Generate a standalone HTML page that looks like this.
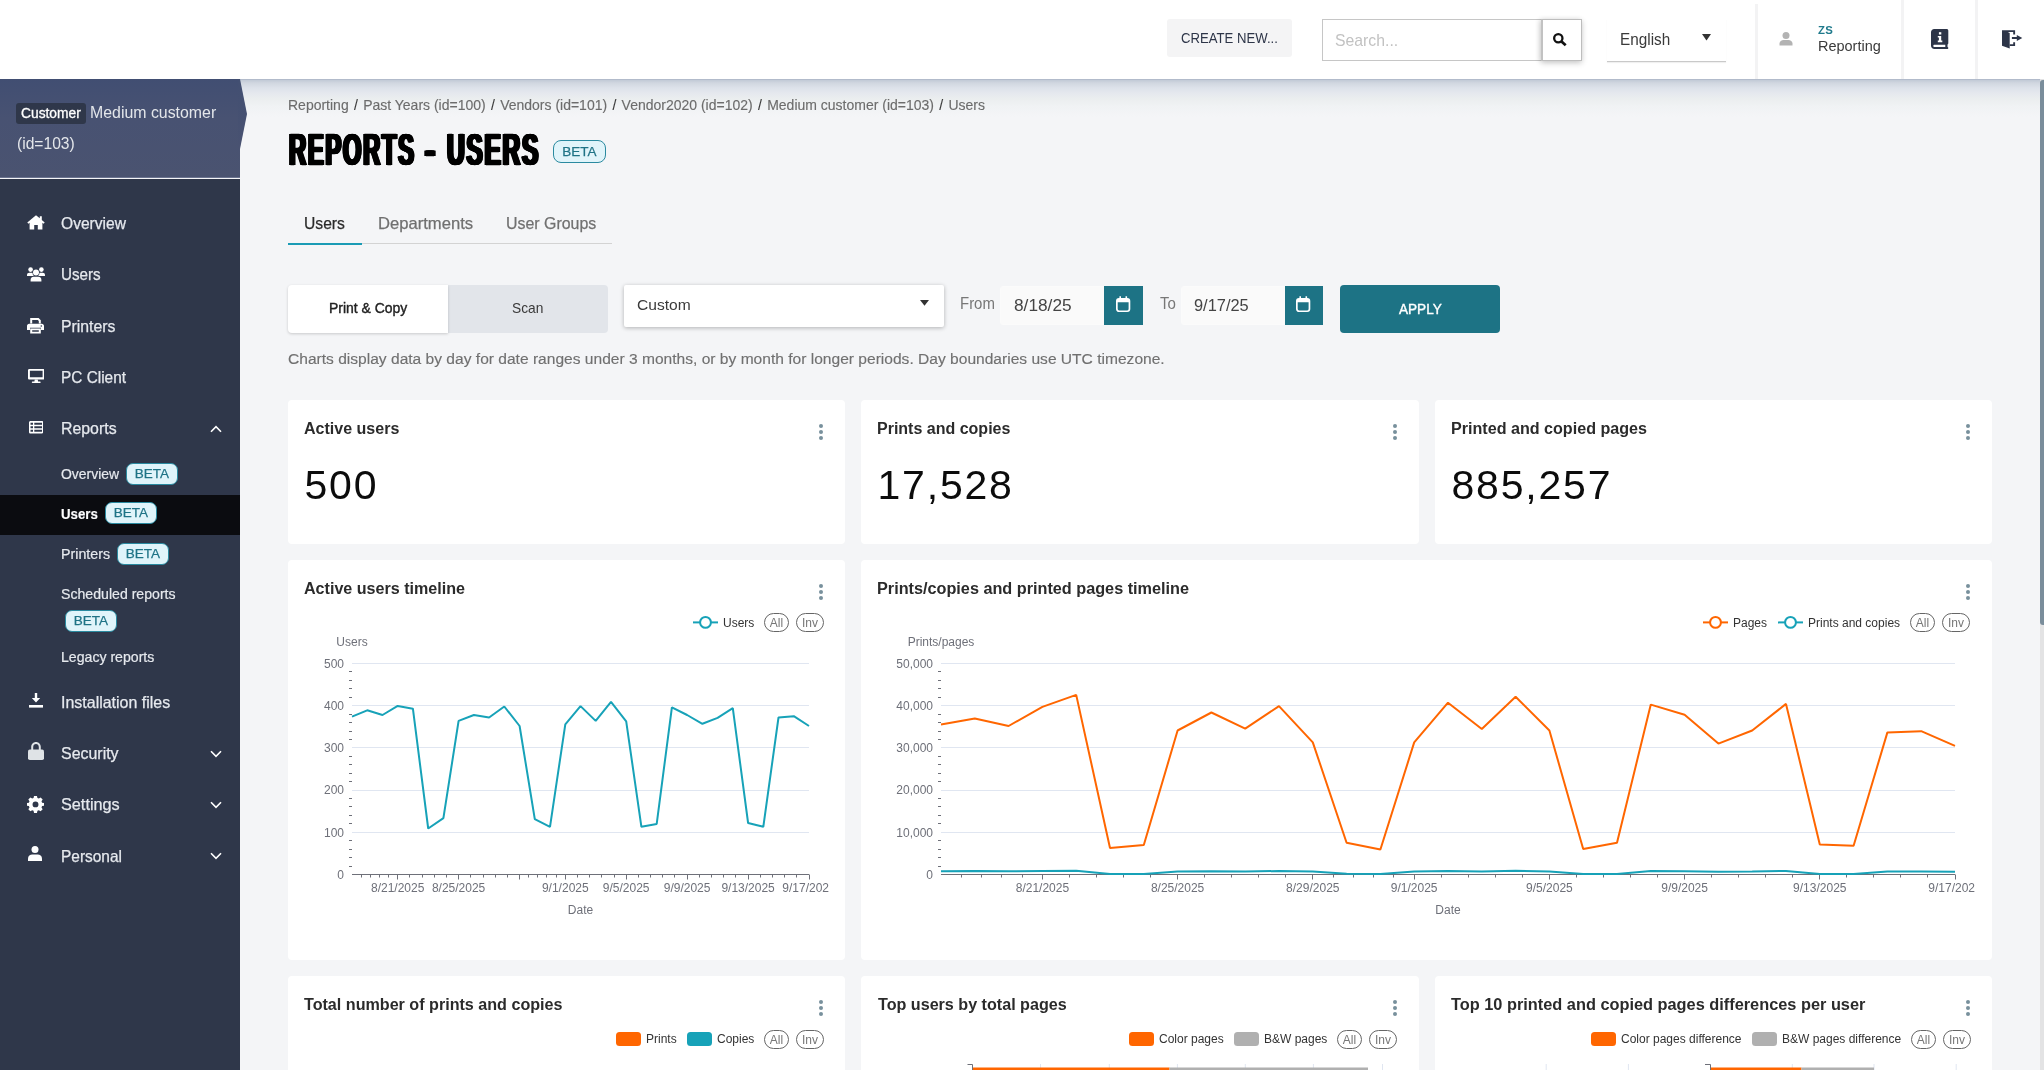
<!DOCTYPE html>
<html lang="en">
<head>
<meta charset="utf-8">
<title>Reports - Users</title>
<style>
*{box-sizing:border-box;margin:0;padding:0}
html,body{width:2044px;height:1070px;overflow:hidden;background:#f4f5f7;font-family:"Liberation Sans",sans-serif;}
.abs{position:absolute}
.t{position:absolute;white-space:nowrap;line-height:1}
#page{position:relative;width:2044px;height:1070px;overflow:hidden;background:#f4f5f7;will-change:transform}
/* top bar */
#topbar{position:absolute;left:0;top:0;width:2044px;height:79px;background:#fff;z-index:5}
#topshadow{position:absolute;left:0;top:79px;width:2044px;height:40px;background:linear-gradient(to bottom,#a9b3c5 0,#c4ccd8 1.5px,#d1d7e0 4px,#dde2ea 9px,#e5e8ee 14px,#ebeeef 20px,#f0f2f4 27px,#f4f5f7 38px);z-index:0}
/* sidebar */
#side{position:absolute;left:0;top:79px;width:240px;height:991px;background:#2f374a;z-index:6}
#sidehead{position:absolute;left:0;top:0;width:240px;height:99px;background:linear-gradient(to bottom,#414e72 0,#485272 40%,#4a5370 100%)}
.mi{position:absolute;left:61px;color:#e6e9ee;-webkit-text-stroke:.25px #e6e9ee;font-size:16.5px;white-space:nowrap;line-height:1}
.smi{position:absolute;left:61px;color:#e6e9ee;-webkit-text-stroke:.2px #e6e9ee;font-size:14.5px;white-space:nowrap;line-height:1}
.beta{position:absolute;border:1px solid #2a8aa0;background:#e0f4fa;color:#1f7386;-webkit-text-stroke:.25px #1f7386;border-radius:7px;font-size:13.5px;line-height:1;text-align:center}
.card{position:absolute;background:#fff;border-radius:4px}
.ct{position:absolute;margin-top:1px;font-weight:bold;font-size:16px;color:#2b2b2b;white-space:nowrap;line-height:1}
.dots{position:absolute;width:4px}
.dots i{display:block;width:4px;height:4px;border-radius:50%;background:#78909c;margin-bottom:2px}
.big{position:absolute;margin-left:.5px;font-size:41px;color:#0c0c0c;letter-spacing:1.8px;white-space:nowrap;line-height:1}
.lg{position:absolute;font-size:12px;color:#333;white-space:nowrap;line-height:1}
.pill{position:absolute;border:1px solid #666;border-radius:10px;height:19px;font-size:12px;color:#777;text-align:center;padding-top:1px;line-height:17px}
.ax{position:absolute;font-size:12px;color:#6e7079;white-space:nowrap;line-height:1}
</style>
</head>
<body>
<div id="page">

<!-- ============ TOP BAR ============ -->
<div id="topshadow"></div>
<div id="topbar">
  <div class="abs" style="left:1167px;top:19px;width:125px;height:38px;background:#f4f4f5;border-radius:3px"></div>
  <div class="t" id="tx-create" style="left:1180.8px;top:30px;font-size:15px;color:#2d3548;transform:scaleX(0.8763);transform-origin:0 0;">CREATE NEW...</div>

  <div class="abs" style="left:1322px;top:19px;width:221px;height:42px;border:1px solid #c6c6c6;background:#fff"></div>
  <div class="t" id="tx-search" style="left:1334.5px;top:32px;font-size:17px;color:#c2c2c2;transform:scaleX(0.9288);transform-origin:0 0;">Search...</div>
  <div class="abs" style="left:1541px;top:19px;width:41px;height:42px;border:1px solid #bdbdbd;border-left:2px solid #c2c2c2;background:#fff;box-shadow:0 2px 6px rgba(0,0,0,0.2),-2px 0 5px rgba(0,0,0,0.08)"></div>
  <svg class="abs" style="left:1552px;top:32px" width="16" height="16" viewBox="0 0 16 16"><circle cx="6.300" cy="6.200" r="4.150" fill="none" stroke="#111" stroke-width="2.300"/><path d="M9.500 9.400 L13.700 13.300" stroke="#111" stroke-width="2.700"/></svg>

  <div class="abs" style="left:1607px;top:19px;width:119px;height:43px;border-bottom:1px solid #c9c9c9;box-shadow:0 1px 1px rgba(0,0,0,0.06)"></div>
  <div class="t" id="tx-eng" style="left:1620.2px;top:31px;font-size:17px;color:#3a3a3a;transform:scaleX(0.9002);transform-origin:0 0;">English</div>
  <svg class="abs" style="left:1702px;top:34px" width="9" height="7" viewBox="0 0 9 7"><path d="M0 0 H9 L4.5 6.5 Z" fill="#333"/></svg>

  <div class="abs" style="left:1755px;top:4px;width:3px;height:75px;background:#f3f3f4"></div>
  <div class="abs" style="left:1901px;top:0;width:3px;height:79px;background:#f3f3f4"></div>
  <div class="abs" style="left:1975px;top:0;width:3px;height:79px;background:#f3f3f4"></div>

  <svg class="abs" style="left:1779px;top:32px" width="14" height="14" viewBox="0 0 14 14"><circle cx="7" cy="3.6" r="3.5" fill="#b3b3b3"/><path d="M0.5 13.5 V11.5 C0.5 9.2 2.6 8 4.5 8 H9.5 C11.4 8 13.5 9.2 13.5 11.5 V13.5 Z" fill="#b3b3b3"/></svg>
  <div class="t" id="tx-zs" style="left:1818.2px;top:25px;font-size:11.5px;font-weight:bold;color:#1f7a8c;letter-spacing:.3px;transform:scaleX(0.9871);transform-origin:0 0;">ZS</div>
  <div class="t" id="tx-rep" style="left:1818.2px;top:38px;font-size:15.5px;color:#3a3a3a;transform:scaleX(0.9343);transform-origin:0 0;">Reporting</div>

  <!-- book icon -->
  <svg class="abs" style="left:1931px;top:29px" width="18" height="20" viewBox="0 0 18 20"><path d="M3.2 0 H15.5 C16.6 0 17.3 .7 17.3 1.7 V14.2 C17.3 14.8 17 15.2 16.5 15.4 V18 C17 18.1 17.3 18.5 17.3 19 C17.3 19.6 16.9 20 16.3 20 H3.4 C1.5 20 0 18.5 0 16.7 V3.2 C0 1.4 1.4 0 3.2 0 Z M3.4 15.8 C2.8 15.8 2.3 16.2 2.3 16.9 C2.3 17.5 2.8 18 3.4 18 H14.3 V15.8 Z" fill="#2d3548"/><rect x="7.9" y="3.2" width="2.4" height="2.3" fill="#fff"/><path d="M6.8 7 H10.2 V11.6 H11.3 V13.2 H6.8 V11.6 H7.9 V8.6 H6.8 Z" fill="#fff"/></svg>
  <!-- sign out icon -->
  <svg class="abs" style="left:2002px;top:29.5px" width="21" height="19" viewBox="0 0 21 19"><path d="M0 0.200 H13.100 V4.500 H11.200 V2.100 H5.800 L7.700 2.900 V18.400 L0 15.700 Z" fill="#2d3548"/><path d="M7.700 14.200 H11.200 V12.200 H13.100 V16.100 H7.700 Z" fill="#2d3548"/><path d="M9.900 6.900 H14.800 V5 L20.300 8 L14.800 11 V9.100 H9.900 Z" fill="#2d3548"/></svg>
</div>

<!-- ============ SIDEBAR ============ -->
<svg class="abs" style="left:238px;top:79px;z-index:7" width="12" height="72" viewBox="0 0 12 72"><defs><linearGradient id="hg" x1="0" y1="0" x2="0" y2="1"><stop offset="0" stop-color="#424f72"/><stop offset="1" stop-color="#495271"/></linearGradient></defs><path d="M0 0 H2 L9 35 L2 70 H0 Z" fill="url(#hg)"/></svg>
<div id="side">
  <div id="sidehead"></div>
  <div class="abs" style="left:0;top:98px;width:240px;height:1px;background:#6b7490"></div><div class="abs" style="left:0;top:99px;width:240px;height:1px;background:#f4f5f8"></div>
  <div class="abs" style="left:16px;top:24px;width:70px;height:21px;background:#2f374a;border-radius:3px"></div>
  <div class="t" id="tx-cust" style="left:21.0px;top:27px;font-size:14px;color:#fff;-webkit-text-stroke:.3px #fff;transform:scaleX(0.9854);transform-origin:0 0;">Customer</div>
  <div class="t" id="tx-med" style="left:89.7px;top:26px;font-size:16px;color:#e3e6ea;transform:scaleX(0.9925);transform-origin:0 0;">Medium customer</div>
  <div class="t" id="tx-id" style="left:16.5px;top:57px;font-size:16px;color:#e3e6ea;transform:scaleX(0.9754);transform-origin:0 0;">(id=103)</div>

  <!-- menu icons: tops are relative to #side (page y - 79) -->
  <svg class="abs" style="left:26.5px;top:136px" width="18" height="14.5" viewBox="0 0 18 14.5"><path d="M9 0.2 L0.3 7.4 L1.4 8.7 L2.6 7.7 V14.5 H7.2 V10 H10.8 V14.5 H15.4 V7.7 L16.6 8.7 L17.7 7.4 L14.8 5 V1.3 H12.8 V3.3 Z" fill="#fff"/></svg>
  <div class="mi" id="tx-m1" style="left:61.2px;top:136px;transform:scaleX(0.9452);transform-origin:0 0;">Overview</div>

  <svg class="abs" style="left:26.5px;top:188px" width="18" height="14.5" viewBox="0 0 18 14.5"><circle cx="3.6" cy="2.6" r="2.3" fill="#fff"/><circle cx="14.4" cy="2.6" r="2.3" fill="#fff"/><circle cx="9" cy="5.4" r="3" fill="#fff"/><path d="M0 8.2 C0 6.6 1 5.8 2.3 5.8 H4.6 C5 5.8 5.3 5.9 5.6 6.1 C5.5 7.3 6 8.3 6.8 9 H0 Z" fill="#fff"/><path d="M18 8.2 C18 6.6 17 5.8 15.7 5.8 H13.4 C13 5.8 12.7 5.9 12.4 6.1 C12.5 7.3 12 8.3 11.200 9 H18 Z" fill="#fff"/><path d="M3.6 14.5 V12.8 C3.600 10.800 5 9.700 6.600 9.700 H11.400 C13 9.700 14.400 10.800 14.400 12.800 V14.500 Z" fill="#fff"/></svg>
  <div class="mi" id="tx-m2" style="left:61.2px;top:187px;transform:scaleX(0.9212);transform-origin:0 0;">Users</div>

  <svg class="abs" style="left:26.5px;top:239px" width="17" height="15.500" viewBox="0 0 17 15.5"><path d="M3.200 0 H11.600 L13.800 2.200 V5.600 H11.800 V3 L10.800 2 H5.200 V5.600 H3.200 Z" fill="#fff"/><path d="M2.200 5.800 H14.800 C16 5.800 17 6.800 17 8 V12 H14 V9.800 H3 V12 H0 V8 C0 6.800 1 5.800 2.200 5.800 Z" fill="#fff"/><circle cx="14.300" cy="8" r=".8" fill="#2f374a"/><path d="M3.200 10.600 H13.800 V15.500 H3.200 Z M5.200 12.200 V13.700 H11.800 V12.200 Z" fill="#fff" fill-rule="evenodd"/></svg>
  <div class="mi" id="tx-m3" style="left:61.2px;top:239px;transform:scaleX(0.9585);transform-origin:0 0;">Printers</div>

  <svg class="abs" style="left:27.500px;top:290px" width="16.500" height="14" viewBox="0 0 16.500 14"><path d="M1.300 0 H15.200 C15.900 0 16.500 .6 16.500 1.300 V9.200 C16.500 9.900 15.900 10.500 15.200 10.500 H1.300 C.6 10.500 0 9.900 0 9.200 V1.300 C0 .6 .6 0 1.300 0 Z M1.900 1.800 V8.200 H14.600 V1.800 Z" fill="#fff" fill-rule="evenodd"/><path d="M6.800 10.500 H9.700 L10.100 12.400 H12 C12.400 12.400 12.700 12.700 12.700 13.200 C12.700 13.700 12.400 14 12 14 H4.500 C4.100 14 3.800 13.700 3.800 13.200 C3.800 12.700 4.100 12.400 4.500 12.400 H6.400 Z" fill="#fff"/></svg>
  <div class="mi" id="tx-m4" style="left:61.2px;top:290px;transform:scaleX(0.9325);transform-origin:0 0;">PC Client</div>

  <svg class="abs" style="left:28.500px;top:342px" width="14.500" height="12.500" viewBox="0 0 14.500 12.500"><path d="M1.600 0 H12.900 C13.800 0 14.500 .7 14.500 1.600 V10.900 C14.500 11.800 13.800 12.500 12.900 12.500 H1.600 C.7 12.500 0 11.800 0 10.900 V1.600 C0 .7 .7 0 1.600 0 Z M1.500 1.700 V3.700 H4 V1.700 Z M5.300 1.700 V3.700 H13 V1.700 Z M1.500 5.200 V7.200 H4 V5.200 Z M5.300 5.200 V7.200 H13 V5.200 Z M1.500 8.700 V10.700 H4 V8.700 Z M5.300 8.700 V10.700 H13 V8.700 Z" fill="#fff" fill-rule="evenodd"/></svg>
  <div class="mi" id="tx-m5" style="left:61.2px;top:341px;transform:scaleX(0.9622);transform-origin:0 0;">Reports</div>
  <svg class="abs" style="left:210px;top:346px" width="12" height="8" viewBox="0 0 12 8"><path d="M1 6.800 L6 1.600 L11 6.800" fill="none" stroke="#fff" stroke-width="1.600"/></svg>

  <!-- submenu -->
  <div class="smi" id="tx-s1" style="left:60.7px;top:388px;transform:scaleX(0.9613);transform-origin:0 0;">Overview</div>
  <div class="beta" style="left:126px;top:384px;width:52px;height:22px;padding-top:3px">BETA</div>

  <div class="abs" style="left:0;top:416px;width:240px;height:40px;background:#0b0c10"></div>
  <div class="smi" id="tx-s2" style="left:60.7px;top:428px;color:#fff;font-weight:bold;font-size:14px;transform:scaleX(0.9455);transform-origin:0 0;">Users</div>
  <div class="beta" style="left:105px;top:423px;width:52px;height:22px;padding-top:3px">BETA</div>

  <div class="smi" id="tx-s3" style="left:60.7px;top:468px;transform:scaleX(0.9826);transform-origin:0 0;">Printers</div>
  <div class="beta" style="left:117px;top:464px;width:52px;height:22px;padding-top:3px">BETA</div>

  <div class="smi" id="tx-s4" style="left:60.7px;top:508px;transform:scaleX(0.9738);transform-origin:0 0;">Scheduled reports</div>
  <div class="beta" style="left:65px;top:531px;width:52px;height:22px;padding-top:3px">BETA</div>

  <div class="smi" id="tx-s5" style="left:60.7px;top:571px;transform:scaleX(0.9727);transform-origin:0 0;">Legacy reports</div>

  <svg class="abs" style="left:29px;top:614px" width="14" height="15" viewBox="0 0 14 15"><path d="M5.800 0 H8.200 V5 H11.200 L7 9.500 L2.800 5 H5.800 Z" fill="#fff"/><rect x="0" y="12" width="14" height="2.600" fill="#fff"/></svg>
  <div class="mi" id="tx-m6" style="left:61.0px;top:615px;transform:scaleX(0.9680);transform-origin:0 0;">Installation files</div>

  <svg class="abs" style="left:28px;top:663px" width="16" height="18" viewBox="0 0 16 18"><path d="M3.200 8 V5 C3.200 2.200 5.300 0 8 0 C10.700 0 12.800 2.200 12.800 5 V8 H10.800 V5 C10.800 3.300 9.600 2 8 2 C6.400 2 5.200 3.300 5.200 5 V8 Z" fill="#dfe3e6"/><rect x="0" y="7.600" width="16" height="10.400" rx="1.800" fill="#dfe3e6"/></svg>
  <div class="mi" id="tx-m7" style="left:61.0px;top:666px;transform:scaleX(0.9663);transform-origin:0 0;">Security</div>
  <svg class="abs" style="left:210px;top:671px" width="12" height="8" viewBox="0 0 12 8"><path d="M1 1.200 L6 6.400 L11 1.200" fill="none" stroke="#fff" stroke-width="1.600"/></svg>

  <svg class="abs" style="left:26.500px;top:717px" width="17" height="17" viewBox="0 0 17 17"><path d="M7 0 H10 L10.500 2.200 L11.900 2.800 L13.800 1.600 L15.900 3.700 L14.700 5.600 L15.300 7 L17.500 7.500 V10 L15.300 10.500 L14.700 11.900 L15.900 13.800 L13.800 15.900 L11.900 14.700 L10.500 15.300 L10 17.500 H7 L6.500 15.300 L5.100 14.700 L3.200 15.900 L1.100 13.800 L2.300 11.900 L1.700 10.500 L-.5 10 V7.500 L1.700 7 L2.300 5.600 L1.100 3.700 L3.200 1.600 L5.100 2.800 L6.500 2.200 Z M8.500 5.700 A3 3 0 1 0 8.500 11.800 A3 3 0 1 0 8.500 5.700 Z" fill="#fff" fill-rule="evenodd" transform="translate(.25,-.1) scale(.97)"/></svg>
  <div class="mi" id="tx-m8" style="left:61.0px;top:717px;transform:scaleX(0.9845);transform-origin:0 0;">Settings</div>
  <svg class="abs" style="left:210px;top:722px" width="12" height="8" viewBox="0 0 12 8"><path d="M1 1.200 L6 6.400 L11 1.200" fill="none" stroke="#fff" stroke-width="1.600"/></svg>

  <svg class="abs" style="left:28px;top:767px" width="14" height="15" viewBox="0 0 14 15"><circle cx="7" cy="3.600" r="3.500" fill="#fff"/><path d="M0 15 V12.500 C0 10 2.200 8.600 4.200 8.600 H9.800 C11.800 8.600 14 10 14 12.500 V15 Z" fill="#fff"/></svg>
  <div class="mi" id="tx-m9" style="left:61.0px;top:769px;transform:scaleX(0.9367);transform-origin:0 0;">Personal</div>
  <svg class="abs" style="left:210px;top:773px" width="12" height="8" viewBox="0 0 12 8"><path d="M1 1.200 L6 6.400 L11 1.200" fill="none" stroke="#fff" stroke-width="1.600"/></svg>
</div>

<!-- ============ MAIN ============ -->
<div class="t" id="tx-bc" style="left:288.0px;top:97px;font-size:15px;color:#6c6c6c;-webkit-text-stroke:.15px #6c6c6c;transform:scaleX(0.9329);transform-origin:0 0;">Reporting <b style="font-weight:normal;color:#333;margin:0 1.5px">/</b> Past Years (id=100) <b style="font-weight:normal;color:#333;margin:0 1.5px">/</b> Vendors (id=101) <b style="font-weight:normal;color:#333;margin:0 1.5px">/</b> Vendor2020 (id=102) <b style="font-weight:normal;color:#333;margin:0 1.5px">/</b> Medium customer (id=103) <b style="font-weight:normal;color:#333;margin:0 1.5px">/</b> Users</div>

<!--TITLE-START--><div class="t" id="ti-1" style="left:288.8px;top:128.5px;font-size:43.5px;font-weight:bold;color:#000;-webkit-text-stroke:.6px #000;text-shadow:1px 0 0 #000,-1px 0 0 #000,2px 0 0 #000,-2px 0 0 #000,2.6px 0 0 #000,-2.6px 0 0 #000;transform-origin:0 0;letter-spacing:3px;transform:scaleX(0.5474)">REPORTS</div><div class="t" id="ti-2" style="left:424.6px;top:128.5px;font-size:43.5px;font-weight:bold;color:#000;-webkit-text-stroke:.6px #000;text-shadow:1px 0 0 #000,-1px 0 0 #000,2px 0 0 #000,-2px 0 0 #000,2.6px 0 0 #000,-2.6px 0 0 #000;transform-origin:0 0;letter-spacing:3px;transform:scaleX(0.69)">-</div><div class="t" id="ti-3" style="left:447px;top:128.5px;font-size:43.5px;font-weight:bold;color:#000;-webkit-text-stroke:.6px #000;text-shadow:1px 0 0 #000,-1px 0 0 #000,2px 0 0 #000,-2px 0 0 #000,2.6px 0 0 #000,-2.6px 0 0 #000;transform-origin:0 0;letter-spacing:3px;transform:scaleX(0.5639)">USERS</div><!--TITLE-END-->
<div class="beta" style="left:553px;top:140px;width:53px;height:23px;padding-top:3.5px;border-radius:8px;font-size:13.5px">BETA</div>

<!-- tabs -->
<div class="abs" style="left:288px;top:243px;width:324px;height:1px;background:#d3d3d3"></div>
<div class="abs" style="left:288px;top:243px;width:74px;height:2px;background:#1a9bb5"></div>
<div class="t" id="tx-tab1" style="left:304.3px;top:215px;font-size:16.500px;color:#2a2a2a;-webkit-text-stroke:.25px #2a2a2a;transform:scaleX(0.9491);transform-origin:0 0;">Users</div>
<div class="t" id="tx-tab2" style="left:378.1px;top:215px;font-size:16.500px;color:#707070;-webkit-text-stroke:.25px #707070;transform:scaleX(1.0067);transform-origin:0 0;">Departments</div>
<div class="t" id="tx-tab3" style="left:505.6px;top:215px;font-size:16.500px;color:#707070;-webkit-text-stroke:.25px #707070;transform:scaleX(0.9644);transform-origin:0 0;">User Groups</div>

<!-- filter row -->
<div class="abs" style="left:448px;top:285px;width:160px;height:48px;background:#e2e5ea;border-radius:0 4px 4px 0"></div>
<div class="abs" style="left:288px;top:285px;width:160px;height:48px;background:#fff;border-radius:4px 0 0 4px;box-shadow:0 1px 3px rgba(0,0,0,.18)"></div>
<div class="t" id="tx-pc" style="left:328.6px;top:301px;font-size:14.500px;color:#222;-webkit-text-stroke:.4px #222;transform:scaleX(0.9618);transform-origin:0 0;">Print &amp; Copy</div>
<div class="t" id="tx-scan" style="left:511.7px;top:301px;font-size:14.500px;color:#3a3a3a;transform:scaleX(0.9497);transform-origin:0 0;">Scan</div>

<div class="abs" style="left:624px;top:285px;width:320px;height:42px;background:#fff;border-radius:2px;box-shadow:0 1px 4px rgba(0,0,0,.28)"></div>
<div class="t" id="tx-custom" style="left:636.8px;top:297px;font-size:15.500px;color:#3a3a3a;transform:scaleX(1.0055);transform-origin:0 0;">Custom</div>
<svg class="abs" style="left:920px;top:300px" width="9" height="6" viewBox="0 0 9 6"><path d="M0 0 H9 L4.500 5.800 Z" fill="#333"/></svg>

<div class="t" id="tx-from" style="left:960.4px;top:296px;font-size:16px;color:#777;transform:scaleX(0.9350);transform-origin:0 0;">From</div>
<div class="abs" style="left:1000px;top:286px;width:105px;height:39px;background:#fafafa;border:1px solid #fbfbfb;border-radius:3px 0 0 3px"></div>
<div class="t" id="tx-d1" style="left:1013.8px;top:298px;font-size:16px;color:#444;transform:scaleX(1.0788);transform-origin:0 0;">8/18/25</div>
<div class="abs" style="left:1104px;top:286px;width:39px;height:39px;background:#1d7385"></div>
<svg class="abs" style="left:1116px;top:296px" width="15" height="17" viewBox="0 0 15 17"><rect x="0.850" y="2.850" width="12.600" height="12.400" rx="2.200" fill="none" stroke="#fff" stroke-width="1.700"/><path d="M0.850 6.300 V4.500 Q0.850 2.850 3 2.850 H11.300 Q13.450 2.850 13.450 4.500 V6.300 Z" fill="#fff"/><path d="M4.200 0.300 V3 M10.300 0.300 V3" stroke="#fff" stroke-width="1.600" fill="none"/></svg>

<div class="t" id="tx-to" style="left:1160.2px;top:296px;font-size:16px;color:#777;transform:scaleX(0.9405);transform-origin:0 0;">To</div>
<div class="abs" style="left:1181px;top:286px;width:105px;height:39px;background:#fafafa;border:1px solid #fbfbfb;border-radius:3px 0 0 3px"></div>
<div class="t" id="tx-d2" style="left:1194.3px;top:298px;font-size:16px;color:#444;transform:scaleX(1.0245);transform-origin:0 0;">9/17/25</div>
<div class="abs" style="left:1285px;top:286px;width:38px;height:39px;background:#1d7385"></div>
<svg class="abs" style="left:1296px;top:296px" width="15" height="17" viewBox="0 0 15 17"><rect x="0.850" y="2.850" width="12.600" height="12.400" rx="2.200" fill="none" stroke="#fff" stroke-width="1.700"/><path d="M0.850 6.300 V4.500 Q0.850 2.850 3 2.850 H11.300 Q13.450 2.850 13.450 4.500 V6.300 Z" fill="#fff"/><path d="M4.200 0.300 V3 M10.300 0.300 V3" stroke="#fff" stroke-width="1.600" fill="none"/></svg>

<div class="abs" style="left:1340px;top:285px;width:160px;height:48px;background:#1d7385;border-radius:4px"></div>
<div class="t" id="tx-apply" style="left:1398.9px;top:301px;font-size:15px;color:#fff;-webkit-text-stroke:.4px #fff;transform:scaleX(0.9058);transform-origin:0 0;">APPLY</div>

<div class="t" id="tx-note" style="left:287.9px;top:351px;font-size:15.500px;color:#707070;-webkit-text-stroke:.15px #707070;transform:scaleX(1.0045);transform-origin:0 0;">Charts display data by day for date ranges under 3 months, or by month for longer periods. Day boundaries use UTC timezone.</div>

<!-- KPI cards -->
<div class="card" style="left:288px;top:400px;width:557px;height:144px"></div>
<div class="ct" id="tx-k1" style="left:304.4px;top:420px;transform:scaleX(1.0013);transform-origin:0 0;">Active users</div>
<div class="dots" style="left:819px;top:424px"><i></i><i></i><i></i></div>
<div class="big" id="tx-n1" style="left:304px;top:465px">500</div>

<div class="card" style="left:861px;top:400px;width:558px;height:144px"></div>
<div class="ct" id="tx-k2" style="left:877.0px;top:420px;transform:scaleX(1.0002);transform-origin:0 0;">Prints and copies</div>
<div class="dots" style="left:1393px;top:424px"><i></i><i></i><i></i></div>
<div class="big" id="tx-n2" style="left:877px;top:465px">17,528</div>

<div class="card" style="left:1435px;top:400px;width:557px;height:144px"></div>
<div class="ct" id="tx-k3" style="left:1451.0px;top:420px;transform:scaleX(1.0067);transform-origin:0 0;">Printed and copied pages</div>
<div class="dots" style="left:1966px;top:424px"><i></i><i></i><i></i></div>
<div class="big" id="tx-n3" style="left:1451px;top:465px">885,257</div>

<!-- chart cards -->
<div class="card" style="left:288px;top:560px;width:557px;height:400px"></div>
<div class="ct" id="tx-c1" style="left:304.0px;top:580px;transform:scaleX(1.0058);transform-origin:0 0;">Active users timeline</div>
<div class="dots" style="left:819px;top:584px"><i></i><i></i><i></i></div>

<div class="card" style="left:861px;top:560px;width:1131px;height:400px"></div>
<div class="ct" id="tx-c2" style="left:877.0px;top:580px;transform:scaleX(1.0142);transform-origin:0 0;">Prints/copies and printed pages timeline</div>
<div class="dots" style="left:1966px;top:584px"><i></i><i></i><i></i></div>

<!-- bottom cards -->
<div class="card" style="left:288px;top:976px;width:557px;height:120px"></div>
<div class="ct" id="tx-b1" style="left:304.0px;top:996px;transform:scaleX(1.0074);transform-origin:0 0;">Total number of prints and copies</div>
<div class="dots" style="left:819px;top:1000px"><i></i><i></i><i></i></div>

<div class="card" style="left:861px;top:976px;width:558px;height:120px"></div>
<div class="ct" id="tx-b2" style="left:877.5px;top:996px;transform:scaleX(1.0075);transform-origin:0 0;">Top users by total pages</div>
<div class="dots" style="left:1393px;top:1000px"><i></i><i></i><i></i></div>

<div class="card" style="left:1435px;top:976px;width:557px;height:120px"></div>
<div class="ct" id="tx-b3" style="left:1450.6px;top:996px;transform:scaleX(1.0206);transform-origin:0 0;">Top 10 printed and copied pages differences per user</div>
<div class="dots" style="left:1966px;top:1000px"><i></i><i></i><i></i></div>

<!--CHARTS-START-->
<svg class="abs" style="left:0;top:0;z-index:2" width="829" height="1070" viewBox="0 0 829 1070" font-family="Liberation Sans, sans-serif" font-size="12">
<text x="344" y="878.7" text-anchor="end" fill="#6e7079">0</text>
<path d="M349 866.5H352" stroke="#6e7079" stroke-width="1"/>
<path d="M349 857.5H352" stroke="#6e7079" stroke-width="1"/>
<path d="M349 849.5H352" stroke="#6e7079" stroke-width="1"/>
<path d="M349 840.5H352" stroke="#6e7079" stroke-width="1"/>
<path d="M352 832.5H809" stroke="#e0e6f1" stroke-width="1"/>
<text x="344" y="836.5" text-anchor="end" fill="#6e7079">100</text>
<path d="M349 823.5H352" stroke="#6e7079" stroke-width="1"/>
<path d="M349 815.5H352" stroke="#6e7079" stroke-width="1"/>
<path d="M349 806.5H352" stroke="#6e7079" stroke-width="1"/>
<path d="M349 798.5H352" stroke="#6e7079" stroke-width="1"/>
<path d="M352 790.5H809" stroke="#e0e6f1" stroke-width="1"/>
<text x="344" y="794.3" text-anchor="end" fill="#6e7079">200</text>
<path d="M349 781.5H352" stroke="#6e7079" stroke-width="1"/>
<path d="M349 773.5H352" stroke="#6e7079" stroke-width="1"/>
<path d="M349 764.5H352" stroke="#6e7079" stroke-width="1"/>
<path d="M349 756.5H352" stroke="#6e7079" stroke-width="1"/>
<path d="M352 747.5H809" stroke="#e0e6f1" stroke-width="1"/>
<text x="344" y="752.1" text-anchor="end" fill="#6e7079">300</text>
<path d="M349 739.5H352" stroke="#6e7079" stroke-width="1"/>
<path d="M349 731.5H352" stroke="#6e7079" stroke-width="1"/>
<path d="M349 722.5H352" stroke="#6e7079" stroke-width="1"/>
<path d="M349 714.5H352" stroke="#6e7079" stroke-width="1"/>
<path d="M352 705.5H809" stroke="#e0e6f1" stroke-width="1"/>
<text x="344" y="709.9" text-anchor="end" fill="#6e7079">400</text>
<path d="M349 697.5H352" stroke="#6e7079" stroke-width="1"/>
<path d="M349 688.5H352" stroke="#6e7079" stroke-width="1"/>
<path d="M349 680.5H352" stroke="#6e7079" stroke-width="1"/>
<path d="M349 671.5H352" stroke="#6e7079" stroke-width="1"/>
<path d="M352 663.5H809" stroke="#e0e6f1" stroke-width="1"/>
<text x="344" y="667.7" text-anchor="end" fill="#6e7079">500</text>
<path d="M352 874.5H809" stroke="#6e7079" stroke-width="1"/>
<path d="M361.5 874.5V877.5" stroke="#6e7079" stroke-width="1"/>
<path d="M370.5 874.5V877.5" stroke="#6e7079" stroke-width="1"/>
<path d="M379.5 874.5V877.5" stroke="#6e7079" stroke-width="1"/>
<path d="M388.5 874.5V877.5" stroke="#6e7079" stroke-width="1"/>
<path d="M409.5 874.5V877.5" stroke="#6e7079" stroke-width="1"/>
<path d="M422.5 874.5V877.5" stroke="#6e7079" stroke-width="1"/>
<path d="M434.5 874.5V877.5" stroke="#6e7079" stroke-width="1"/>
<path d="M446.5 874.5V877.5" stroke="#6e7079" stroke-width="1"/>
<path d="M470.5 874.5V877.5" stroke="#6e7079" stroke-width="1"/>
<path d="M483.5 874.5V877.5" stroke="#6e7079" stroke-width="1"/>
<path d="M495.5 874.5V877.5" stroke="#6e7079" stroke-width="1"/>
<path d="M507.5 874.5V877.5" stroke="#6e7079" stroke-width="1"/>
<path d="M528.5 874.5V877.5" stroke="#6e7079" stroke-width="1"/>
<path d="M537.5 874.5V877.5" stroke="#6e7079" stroke-width="1"/>
<path d="M546.5 874.5V877.5" stroke="#6e7079" stroke-width="1"/>
<path d="M556.5 874.5V877.5" stroke="#6e7079" stroke-width="1"/>
<path d="M577.5 874.5V877.5" stroke="#6e7079" stroke-width="1"/>
<path d="M589.5 874.5V877.5" stroke="#6e7079" stroke-width="1"/>
<path d="M601.5 874.5V877.5" stroke="#6e7079" stroke-width="1"/>
<path d="M614.5 874.5V877.5" stroke="#6e7079" stroke-width="1"/>
<path d="M638.5 874.5V877.5" stroke="#6e7079" stroke-width="1"/>
<path d="M650.5 874.5V877.5" stroke="#6e7079" stroke-width="1"/>
<path d="M662.5 874.5V877.5" stroke="#6e7079" stroke-width="1"/>
<path d="M674.5 874.5V877.5" stroke="#6e7079" stroke-width="1"/>
<path d="M699.5 874.5V877.5" stroke="#6e7079" stroke-width="1"/>
<path d="M711.5 874.5V877.5" stroke="#6e7079" stroke-width="1"/>
<path d="M723.5 874.5V877.5" stroke="#6e7079" stroke-width="1"/>
<path d="M735.5 874.5V877.5" stroke="#6e7079" stroke-width="1"/>
<path d="M760.5 874.5V877.5" stroke="#6e7079" stroke-width="1"/>
<path d="M772.5 874.5V877.5" stroke="#6e7079" stroke-width="1"/>
<path d="M784.5 874.5V877.5" stroke="#6e7079" stroke-width="1"/>
<path d="M796.5 874.5V877.5" stroke="#6e7079" stroke-width="1"/>
<path d="M397.5 874.5V879.5" stroke="#6e7079" stroke-width="1"/>
<text x="397.7" y="892.0" text-anchor="middle" fill="#6e7079">8/21/2025</text>
<path d="M458.5 874.5V879.5" stroke="#6e7079" stroke-width="1"/>
<text x="458.6" y="892.0" text-anchor="middle" fill="#6e7079">8/25/2025</text>
<path d="M519.5 874.5V879.5" stroke="#6e7079" stroke-width="1"/>
<path d="M565.5 874.5V879.5" stroke="#6e7079" stroke-width="1"/>
<text x="565.3" y="892.0" text-anchor="middle" fill="#6e7079">9/1/2025</text>
<path d="M626.5 874.5V879.5" stroke="#6e7079" stroke-width="1"/>
<text x="626.2" y="892.0" text-anchor="middle" fill="#6e7079">9/5/2025</text>
<path d="M687.5 874.5V879.5" stroke="#6e7079" stroke-width="1"/>
<text x="687.1" y="892.0" text-anchor="middle" fill="#6e7079">9/9/2025</text>
<path d="M748.5 874.5V879.5" stroke="#6e7079" stroke-width="1"/>
<text x="748.1" y="892.0" text-anchor="middle" fill="#6e7079">9/13/2025</text>
<path d="M809.5 874.5V879.5" stroke="#6e7079" stroke-width="1"/>
<text x="809.0" y="892.0" text-anchor="middle" fill="#6e7079">9/17/2025</text>
<text x="352" y="645.8" text-anchor="middle" fill="#6e7079">Users</text>
<text x="580.5" y="913.7" text-anchor="middle" fill="#6e7079">Date</text>
<polyline points="352.0,716.7 367.2,710.3 382.5,715.0 397.7,705.9 412.9,708.7 428.2,828.5 443.4,818.2 458.6,720.9 473.9,715.0 489.1,717.5 504.3,706.5 519.6,726.0 534.8,819.2 550.0,826.8 565.3,724.3 580.5,706.1 595.7,720.9 611.0,701.9 626.2,721.3 641.4,826.8 656.7,823.9 671.9,707.4 687.1,715.0 702.4,723.8 717.6,717.9 732.8,708.2 748.1,823.0 763.3,826.8 778.5,717.5 793.8,716.2 809.0,726.0" fill="none" stroke="#17a2b8" stroke-width="2" stroke-linejoin="bevel"/>
</svg>
<svg class="abs" style="left:0;top:0;z-index:2" width="1975" height="1070" viewBox="0 0 1975 1070" font-family="Liberation Sans, sans-serif" font-size="12">
<text x="933" y="878.7" text-anchor="end" fill="#6e7079">0</text>
<path d="M938 866.5H941" stroke="#6e7079" stroke-width="1"/>
<path d="M938 857.5H941" stroke="#6e7079" stroke-width="1"/>
<path d="M938 849.5H941" stroke="#6e7079" stroke-width="1"/>
<path d="M938 840.5H941" stroke="#6e7079" stroke-width="1"/>
<path d="M941 832.5H1955" stroke="#e0e6f1" stroke-width="1"/>
<text x="933" y="836.5" text-anchor="end" fill="#6e7079">10,000</text>
<path d="M938 823.5H941" stroke="#6e7079" stroke-width="1"/>
<path d="M938 815.5H941" stroke="#6e7079" stroke-width="1"/>
<path d="M938 806.5H941" stroke="#6e7079" stroke-width="1"/>
<path d="M938 798.5H941" stroke="#6e7079" stroke-width="1"/>
<path d="M941 790.5H1955" stroke="#e0e6f1" stroke-width="1"/>
<text x="933" y="794.3" text-anchor="end" fill="#6e7079">20,000</text>
<path d="M938 781.5H941" stroke="#6e7079" stroke-width="1"/>
<path d="M938 773.5H941" stroke="#6e7079" stroke-width="1"/>
<path d="M938 764.5H941" stroke="#6e7079" stroke-width="1"/>
<path d="M938 756.5H941" stroke="#6e7079" stroke-width="1"/>
<path d="M941 747.5H1955" stroke="#e0e6f1" stroke-width="1"/>
<text x="933" y="752.1" text-anchor="end" fill="#6e7079">30,000</text>
<path d="M938 739.5H941" stroke="#6e7079" stroke-width="1"/>
<path d="M938 731.5H941" stroke="#6e7079" stroke-width="1"/>
<path d="M938 722.5H941" stroke="#6e7079" stroke-width="1"/>
<path d="M938 714.5H941" stroke="#6e7079" stroke-width="1"/>
<path d="M941 705.5H1955" stroke="#e0e6f1" stroke-width="1"/>
<text x="933" y="709.9" text-anchor="end" fill="#6e7079">40,000</text>
<path d="M938 697.5H941" stroke="#6e7079" stroke-width="1"/>
<path d="M938 688.5H941" stroke="#6e7079" stroke-width="1"/>
<path d="M938 680.5H941" stroke="#6e7079" stroke-width="1"/>
<path d="M938 671.5H941" stroke="#6e7079" stroke-width="1"/>
<path d="M941 663.5H1955" stroke="#e0e6f1" stroke-width="1"/>
<text x="933" y="667.7" text-anchor="end" fill="#6e7079">50,000</text>
<path d="M941 874.5H1955" stroke="#6e7079" stroke-width="1"/>
<path d="M961.5 874.5V877.5" stroke="#6e7079" stroke-width="1"/>
<path d="M981.5 874.5V877.5" stroke="#6e7079" stroke-width="1"/>
<path d="M1001.5 874.5V877.5" stroke="#6e7079" stroke-width="1"/>
<path d="M1022.5 874.5V877.5" stroke="#6e7079" stroke-width="1"/>
<path d="M1069.5 874.5V877.5" stroke="#6e7079" stroke-width="1"/>
<path d="M1096.5 874.5V877.5" stroke="#6e7079" stroke-width="1"/>
<path d="M1123.5 874.5V877.5" stroke="#6e7079" stroke-width="1"/>
<path d="M1150.5 874.5V877.5" stroke="#6e7079" stroke-width="1"/>
<path d="M1204.5 874.5V877.5" stroke="#6e7079" stroke-width="1"/>
<path d="M1231.5 874.5V877.5" stroke="#6e7079" stroke-width="1"/>
<path d="M1258.5 874.5V877.5" stroke="#6e7079" stroke-width="1"/>
<path d="M1285.5 874.5V877.5" stroke="#6e7079" stroke-width="1"/>
<path d="M1333.5 874.5V877.5" stroke="#6e7079" stroke-width="1"/>
<path d="M1353.5 874.5V877.5" stroke="#6e7079" stroke-width="1"/>
<path d="M1373.5 874.5V877.5" stroke="#6e7079" stroke-width="1"/>
<path d="M1393.5 874.5V877.5" stroke="#6e7079" stroke-width="1"/>
<path d="M1441.5 874.5V877.5" stroke="#6e7079" stroke-width="1"/>
<path d="M1468.5 874.5V877.5" stroke="#6e7079" stroke-width="1"/>
<path d="M1495.5 874.5V877.5" stroke="#6e7079" stroke-width="1"/>
<path d="M1522.5 874.5V877.5" stroke="#6e7079" stroke-width="1"/>
<path d="M1576.5 874.5V877.5" stroke="#6e7079" stroke-width="1"/>
<path d="M1603.5 874.5V877.5" stroke="#6e7079" stroke-width="1"/>
<path d="M1630.5 874.5V877.5" stroke="#6e7079" stroke-width="1"/>
<path d="M1657.5 874.5V877.5" stroke="#6e7079" stroke-width="1"/>
<path d="M1711.5 874.5V877.5" stroke="#6e7079" stroke-width="1"/>
<path d="M1738.5 874.5V877.5" stroke="#6e7079" stroke-width="1"/>
<path d="M1765.5 874.5V877.5" stroke="#6e7079" stroke-width="1"/>
<path d="M1792.5 874.5V877.5" stroke="#6e7079" stroke-width="1"/>
<path d="M1846.5 874.5V877.5" stroke="#6e7079" stroke-width="1"/>
<path d="M1873.5 874.5V877.5" stroke="#6e7079" stroke-width="1"/>
<path d="M1900.5 874.5V877.5" stroke="#6e7079" stroke-width="1"/>
<path d="M1927.5 874.5V877.5" stroke="#6e7079" stroke-width="1"/>
<path d="M1042.5 874.5V879.5" stroke="#6e7079" stroke-width="1"/>
<text x="1042.4" y="892.0" text-anchor="middle" fill="#6e7079">8/21/2025</text>
<path d="M1177.5 874.5V879.5" stroke="#6e7079" stroke-width="1"/>
<text x="1177.6" y="892.0" text-anchor="middle" fill="#6e7079">8/25/2025</text>
<path d="M1312.5 874.5V879.5" stroke="#6e7079" stroke-width="1"/>
<text x="1312.8" y="892.0" text-anchor="middle" fill="#6e7079">8/29/2025</text>
<path d="M1414.5 874.5V879.5" stroke="#6e7079" stroke-width="1"/>
<text x="1414.2" y="892.0" text-anchor="middle" fill="#6e7079">9/1/2025</text>
<path d="M1549.5 874.5V879.5" stroke="#6e7079" stroke-width="1"/>
<text x="1549.4" y="892.0" text-anchor="middle" fill="#6e7079">9/5/2025</text>
<path d="M1684.5 874.5V879.5" stroke="#6e7079" stroke-width="1"/>
<text x="1684.6" y="892.0" text-anchor="middle" fill="#6e7079">9/9/2025</text>
<path d="M1819.5 874.5V879.5" stroke="#6e7079" stroke-width="1"/>
<text x="1819.8" y="892.0" text-anchor="middle" fill="#6e7079">9/13/2025</text>
<path d="M1955.5 874.5V879.5" stroke="#6e7079" stroke-width="1"/>
<text x="1955.0" y="892.0" text-anchor="middle" fill="#6e7079">9/17/2025</text>
<text x="941" y="645.8" text-anchor="middle" fill="#6e7079">Prints/pages</text>
<text x="1448.0" y="913.7" text-anchor="middle" fill="#6e7079">Date</text>
<polyline points="941.0,724.5 974.8,718.5 1008.6,726.0 1042.4,706.9 1076.2,694.9 1110.0,848.0 1143.8,845.0 1177.6,730.5 1211.4,712.5 1245.2,728.6 1279.0,706.1 1312.8,742.4 1346.6,842.7 1380.4,849.5 1414.2,742.4 1448.0,702.7 1481.8,729.0 1515.6,696.8 1549.4,730.5 1583.2,849.1 1617.0,842.7 1650.8,704.6 1684.6,714.7 1718.4,743.6 1752.2,730.5 1786.0,703.9 1819.8,844.6 1853.6,845.7 1887.4,732.4 1921.2,731.2 1955.0,745.8" fill="none" stroke="#ff6600" stroke-width="2" stroke-linejoin="bevel"/>
<polyline points="941.0,871.3 974.8,871.1 1008.6,871.3 1042.4,871.0 1076.2,870.8 1110.0,874.0 1143.8,873.9 1177.6,871.4 1211.4,871.2 1245.2,871.5 1279.0,871.0 1312.8,871.6 1346.6,873.8 1380.4,874.0 1414.2,871.6 1448.0,870.9 1481.8,871.4 1515.6,870.8 1549.4,871.5 1583.2,874.0 1617.0,873.9 1650.8,870.9 1684.6,871.3 1718.4,871.8 1752.2,871.5 1786.0,871.0 1819.8,873.9 1853.6,873.9 1887.4,871.5 1921.2,871.4 1955.0,871.8" fill="none" stroke="#17a2b8" stroke-width="2" stroke-linejoin="bevel"/>
</svg>
<svg class="abs" style="left:693px;top:615px;z-index:3" width="25" height="15" viewBox="0 0 25 15"><path d="M0 7.4H25" stroke="#17a2b8" stroke-width="2"/><circle cx="12.5" cy="7.4" r="5.4" fill="#fff" stroke="#17a2b8" stroke-width="2"/></svg>
<div class="lg" id="tx-l1" style="left:723px;top:617px;z-index:3">Users</div>
<div class="pill" style="left:764px;top:613px;width:25px;z-index:3">All</div>
<div class="pill" style="left:796px;top:613px;width:28px;z-index:3">Inv</div>
<svg class="abs" style="left:1703px;top:615px;z-index:3" width="25" height="15" viewBox="0 0 25 15"><path d="M0 7.4H25" stroke="#ff6600" stroke-width="2"/><circle cx="12.5" cy="7.4" r="5.4" fill="#fff" stroke="#ff6600" stroke-width="2"/></svg>
<div class="lg" id="tx-l2" style="left:1733px;top:617px;z-index:3">Pages</div>
<svg class="abs" style="left:1778px;top:615px;z-index:3" width="25" height="15" viewBox="0 0 25 15"><path d="M0 7.4H25" stroke="#17a2b8" stroke-width="2"/><circle cx="12.5" cy="7.4" r="5.4" fill="#fff" stroke="#17a2b8" stroke-width="2"/></svg>
<div class="lg" id="tx-l3" style="left:1808px;top:617px;z-index:3">Prints and copies</div>
<div class="pill" style="left:1910px;top:613px;width:25px;z-index:3">All</div>
<div class="pill" style="left:1942px;top:613px;width:28px;z-index:3">Inv</div>
<div class="abs" style="left:616px;top:1032px;width:25px;height:14px;border-radius:3.5px;background:#ff6600;z-index:3"></div>
<div class="lg" id="tx-l4" style="left:646px;top:1033px;z-index:3">Prints</div>
<div class="abs" style="left:687px;top:1032px;width:25px;height:14px;border-radius:3.5px;background:#17a2b8;z-index:3"></div>
<div class="lg" id="tx-l5" style="left:717px;top:1033px;z-index:3">Copies</div>
<div class="pill" style="left:764px;top:1030px;width:25px;z-index:3">All</div>
<div class="pill" style="left:796px;top:1030px;width:28px;z-index:3">Inv</div>
<div class="abs" style="left:1129px;top:1032px;width:25px;height:14px;border-radius:3.5px;background:#ff6600;z-index:3"></div>
<div class="lg" id="tx-l6" style="left:1159px;top:1033px;z-index:3">Color pages</div>
<div class="abs" style="left:1234px;top:1032px;width:25px;height:14px;border-radius:3.5px;background:#b0b0b0;z-index:3"></div>
<div class="lg" id="tx-l7" style="left:1264px;top:1033px;z-index:3">B&amp;W pages</div>
<div class="pill" style="left:1337px;top:1030px;width:25px;z-index:3">All</div>
<div class="pill" style="left:1369px;top:1030px;width:28px;z-index:3">Inv</div>
<div class="abs" style="left:1591px;top:1032px;width:25px;height:14px;border-radius:3.5px;background:#ff6600;z-index:3"></div>
<div class="lg" id="tx-l8" style="left:1621px;top:1033px;z-index:3">Color pages difference</div>
<div class="abs" style="left:1752px;top:1032px;width:25px;height:14px;border-radius:3.5px;background:#b0b0b0;z-index:3"></div>
<div class="lg" id="tx-l9" style="left:1782px;top:1033px;z-index:3">B&amp;W pages difference</div>
<div class="pill" style="left:1911px;top:1030px;width:25px;z-index:3">All</div>
<div class="pill" style="left:1943px;top:1030px;width:28px;z-index:3">Inv</div>
<svg class="abs" style="left:0;top:1060px;z-index:3" width="2044" height="10" viewBox="0 1060 2044 10">
<path d="M1040.5 1064V1070" stroke="#e0e6f1" stroke-width="1"/>
<path d="M1109.3 1064V1070" stroke="#e0e6f1" stroke-width="1"/>
<path d="M1177.4 1064V1070" stroke="#e0e6f1" stroke-width="1"/>
<path d="M1245.3 1064V1070" stroke="#e0e6f1" stroke-width="1"/>
<path d="M1313.4 1064V1070" stroke="#e0e6f1" stroke-width="1"/>
<path d="M1382.5 1064V1070" stroke="#e0e6f1" stroke-width="1"/>
<path d="M967.5 1064.5H972.5V1070" stroke="#6e7079" stroke-width="1" fill="none"/>
<rect x="973" y="1067.5" width="196.5" height="3" fill="#ff6600"/>
<rect x="1169.5" y="1067.5" width="198.5" height="3" fill="#b0b0b0"/>
<path d="M1546.2 1064V1070" stroke="#e0e6f1" stroke-width="1"/>
<path d="M1628.4 1064V1070" stroke="#e0e6f1" stroke-width="1"/>
<path d="M1792.3 1064V1070" stroke="#e0e6f1" stroke-width="1"/>
<path d="M1874 1064V1070" stroke="#e0e6f1" stroke-width="1"/>
<path d="M1956.2 1064V1070" stroke="#e0e6f1" stroke-width="1"/>
<path d="M1705 1064.5H1710.5V1070" stroke="#6e7079" stroke-width="1" fill="none"/>
<rect x="1711" y="1067.5" width="90.5" height="3" fill="#ff6600"/>
<rect x="1801.5" y="1067.5" width="72.5" height="3" fill="#b0b0b0"/>
</svg>
<!--CHARTS-END-->
<!-- scrollbar -->
<div class="abs" style="left:2040px;top:79px;width:4px;height:991px;background:#e3e3e4;z-index:8"></div>
<div class="abs" style="left:2040px;top:80px;width:5px;height:545px;background:#7a8d9b;border-radius:3px 0 0 3px;z-index:9"></div>

</div>
</body>
</html>
